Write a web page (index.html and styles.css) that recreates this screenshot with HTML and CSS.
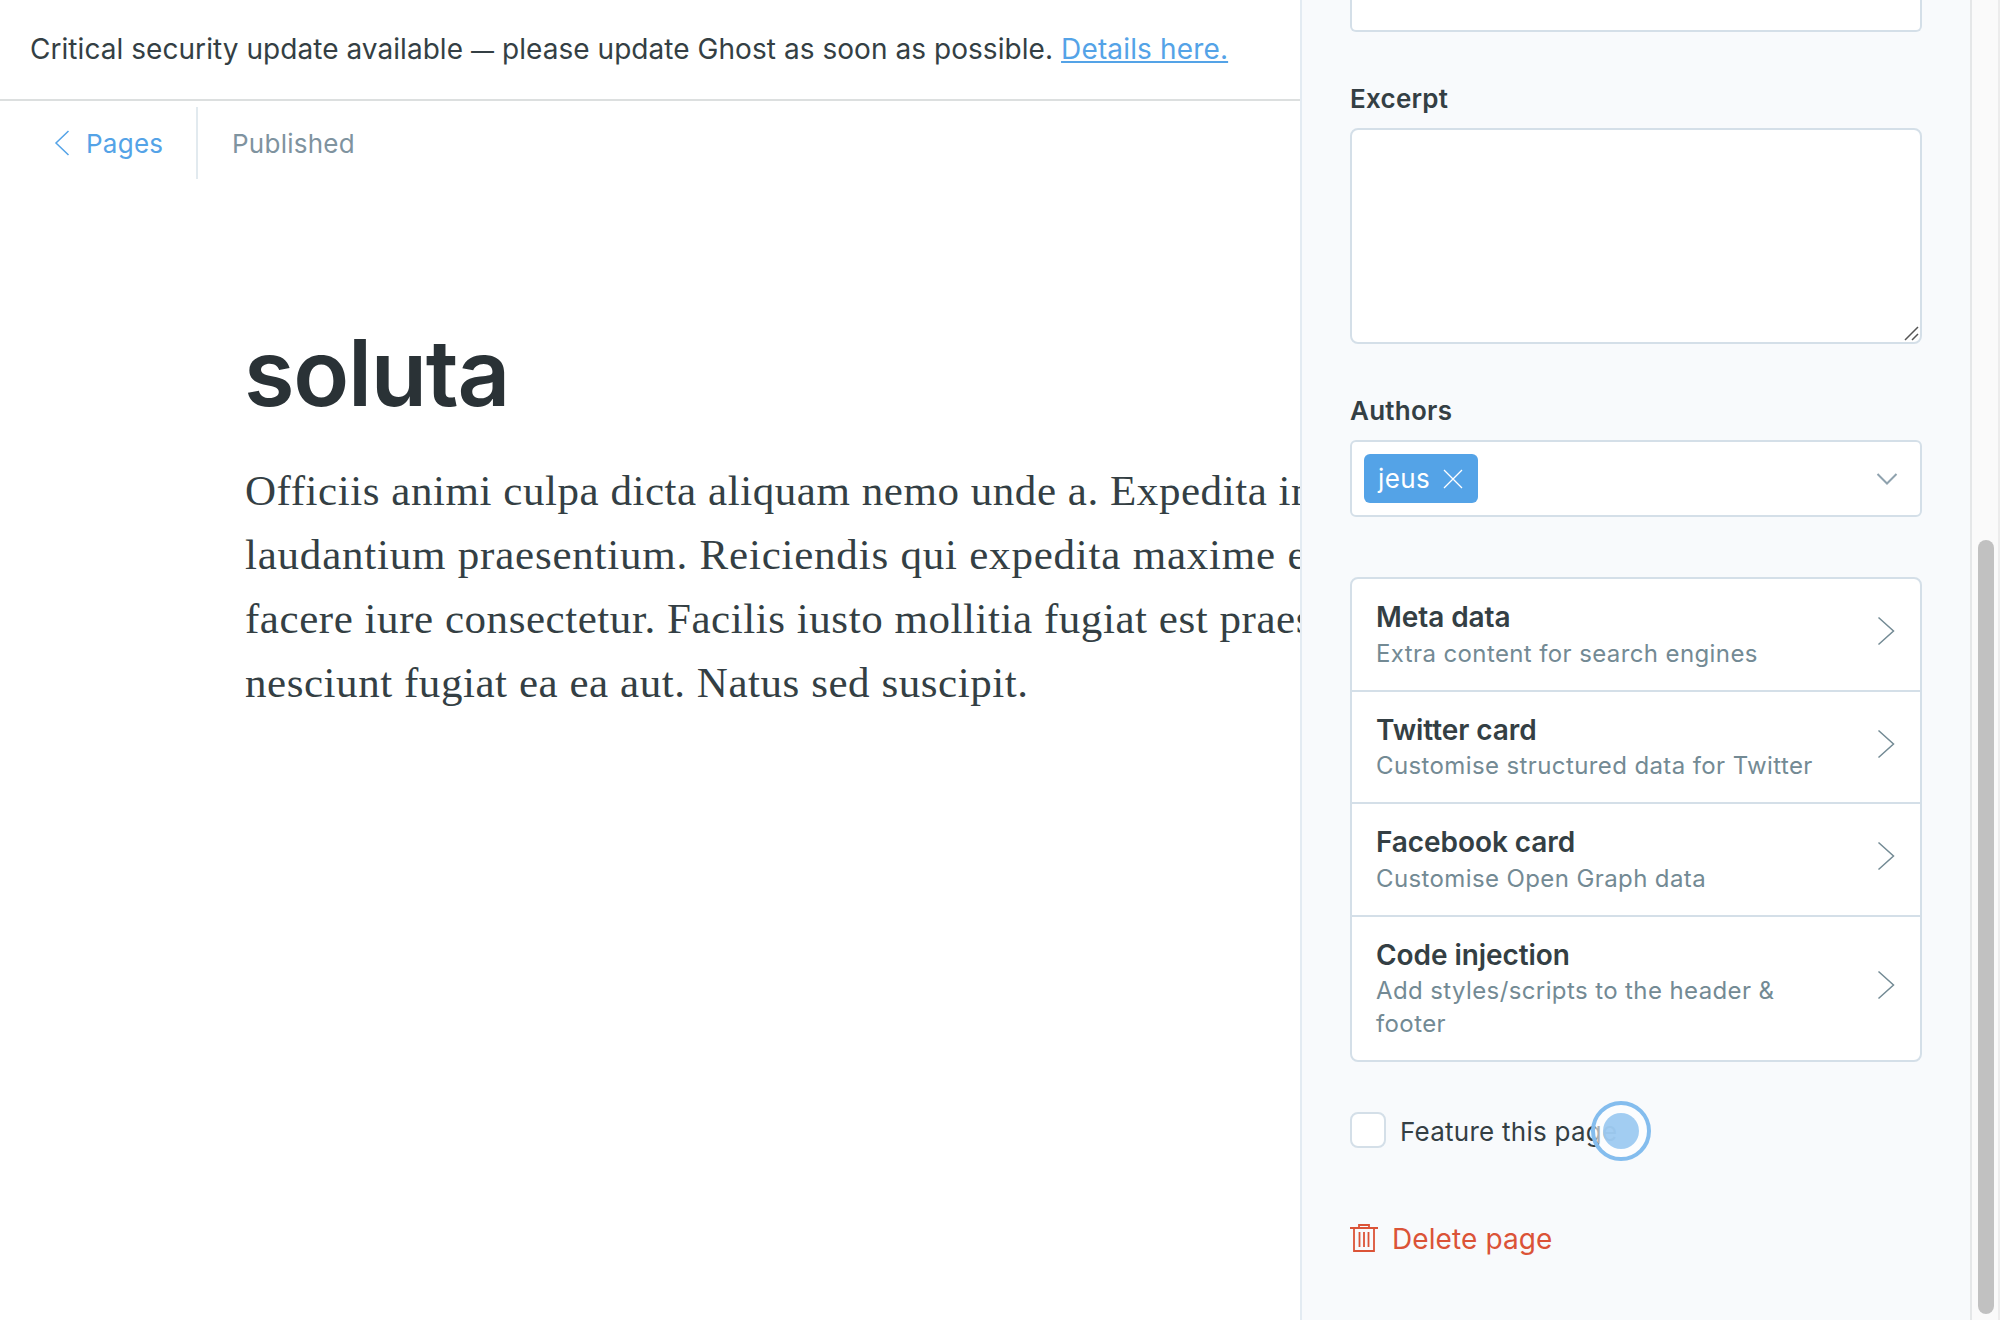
FILE: index.html
```html
<!DOCTYPE html>
<html lang="en">
<head>
<meta charset="utf-8">
<title>soluta</title>
<link rel="stylesheet" href="styles.css">
</head>
<body>
<div class="app">
  <main class="editor">
    <div class="alert"><span class="alert-text">Critical security update available <span class="dash">—</span> please update Ghost as soon as possible.</span><a class="alert-link" href="#">Details here.</a></div>
    <header class="bar">
      <a class="back" href="#"><svg class="back-icon" viewBox="0 0 16 26"><path d="M14.500 1 2 13l12.500 12"/></svg><span>Pages</span></a>
      <span class="status">Published</span>
    </header>
    <article class="post">
      <h1 class="title">soluta</h1>
      <p class="body">Officiis animi culpa dicta aliquam nemo unde a. Expedita in<br><span class="loose">laudantium praesentium. Reiciendis qui expedita maxime e</span><br>facere iure consectetur. Facilis iusto mollitia fugiat est praes<br>nesciunt fugiat ea ea aut. Natus sed suscipit.</p>
    </article>
  </main>
  <aside class="settings">
    <div class="input-cut"></div>
    <label class="label">Excerpt</label>
    <div class="textarea"><svg class="grip" viewBox="0 0 16 16"><path d="M1 14 14 1M8 14l6-6"/></svg></div>
    <label class="label">Authors</label>
    <div class="select">
      <span class="chip">jeus<svg class="x" viewBox="0 0 20 20"><path d="m1 1 18 18M19 1 1 19"/></svg></span>
      <svg class="down" viewBox="0 0 22 14"><path d="m1.500 2 9.500 9.500L20.500 2"/></svg>
    </div>
    <ul class="list">
      <li class="item"><div><b class="name">Meta data</b><span class="desc">Extra content for search engines</span></div><svg class="go" viewBox="0 0 18 30"><path d="m1.500 1.500 15 13.500-15 13.500"/></svg></li>
      <li class="item"><div><b class="name">Twitter card</b><span class="desc">Customise structured data for Twitter</span></div><svg class="go" viewBox="0 0 18 30"><path d="m1.500 1.500 15 13.500-15 13.500"/></svg></li>
      <li class="item"><div><b class="name">Facebook card</b><span class="desc">Customise Open Graph data</span></div><svg class="go" viewBox="0 0 18 30"><path d="m1.500 1.500 15 13.500-15 13.500"/></svg></li>
      <li class="item tall"><div><b class="name">Code injection</b><span class="desc">Add styles/scripts to the header &amp;<br>footer</span></div><svg class="go" viewBox="0 0 18 30"><path d="m1.500 1.500 15 13.500-15 13.500"/></svg></li>
    </ul>
    <label class="feature"><span class="box"></span><span class="feature-text">Feature this page</span><span class="pointer"></span></label>
    <button class="delete"><svg class="trash" viewBox="0 0 28 28"><path d="M0 4h28M4 4v23h20V4M9 4V1h10v3M9.500 8v15M14 8v15M18.500 8v15"/></svg><span class="delete-text">Delete page</span></button>
  </aside>
  <div class="scroll"><div class="thumb"></div></div>
</div>
</body>
</html>
```
FILE: styles.css
```css
* { box-sizing: border-box; }
body { margin: 0; background: #fff; color: #343f44; font: 26px "Inter", sans-serif; letter-spacing: 0.25px; }
.app { display: flex; width: 2000px; height: 1320px; overflow: hidden; }
.editor { width: 1300px; overflow: hidden; }
.alert { display: flex; align-items: center; gap: 8px; height: 101px; padding: 0 30px 2px; border-bottom: 2px solid #dcdfdf; font-size: 28px; letter-spacing: 0.05px; white-space: nowrap; }
.dash { font-size: 23px; }
.alert-link { color: #54a3e7; letter-spacing: 0.15px; text-decoration-thickness: 2px; text-underline-offset: 2px; text-decoration-skip-ink: none; }
.bar { display: flex; align-items: center; height: 84px; }
.back { display: flex; align-items: center; gap: 16px; height: 72px; width: 198px; padding-left: 54px; border-right: 2px solid #e2eaef; color: #54a3e7; text-decoration: none; }
.back-icon { width: 16px; height: 26px; fill: none; stroke: #54a3e7; stroke-width: 1.5; }
.status { padding-left: 34px; color: #7f939f; }
.post { padding: 133px 0 0 245px; }
.title { margin: 0 0 0 -1px; font-size: 92px; line-height: 110px; font-weight: 600; letter-spacing: -1.3px; color: #2a3236; }
.body { margin: 31px 0 0; font: 43px/64px "Liberation Serif", serif; letter-spacing: 0.55px; white-space: nowrap; }
.loose { letter-spacing: 0.78px; }
.settings { width: 670px; padding: 0 48px; border-left: 2px solid #e3ebf2; background: #f8fafc; }
.input-cut { height: 32px; border: 2px solid #d4dfe8; border-top: 0; border-radius: 0 0 6px 6px; background: #fff; }
.label { display: block; margin-top: 51px; height: 45px; line-height: 32px; font-weight: 600; }
.textarea { display: flex; justify-content: flex-end; align-items: flex-end; height: 216px; border: 2px solid #d4dfe8; border-radius: 8px; background: #fff; }
.grip { width: 16px; height: 16px; fill: none; stroke: #555; stroke-width: 1.5; }
.select { display: flex; justify-content: space-between; align-items: center; height: 77px; padding: 0 22px 0 12px; border: 2px solid #d4dfe8; border-radius: 6px; background: #fff; }
.chip { display: flex; align-items: center; gap: 13px; height: 49px; width: 114px; padding: 0 14px; border-radius: 6px; background: #54a3e7; color: #fff; letter-spacing: 0.4px; }
.x { width: 20px; height: 20px; fill: none; stroke: #fff; stroke-width: 1.3; }
.down { width: 22px; height: 14px; fill: none; stroke: #8fa2ae; stroke-width: 2; }
.list { margin: 60px 0 0; padding: 0; list-style: none; border: 2px solid #d4dfe8; border-radius: 8px; background: #fff; }
.item { display: flex; justify-content: space-between; height: 112.5px; padding: 20px 25px 20px 24px; border-bottom: 2px solid #d4dfe8; }
.tall { height: 143px; border: 0; }
.name { display: block; margin-bottom: 1.5px; font-size: 28px; line-height: 36px; font-weight: 600; letter-spacing: -0.07px; }
.desc { display: block; font-size: 24px; line-height: 33px; letter-spacing: 0.39px; color: #738a94; }
.go { width: 18px; height: 30px; align-self: center; margin-bottom: 6px; fill: none; stroke: #738a94; stroke-width: 1.5; }
.feature { position: relative; display: flex; align-items: center; gap: 14px; margin-top: 50px; height: 36px; }
.feature-text { padding-top: 4px; }
.box { width: 36px; height: 36px; border: 2px solid #d4dfe8; border-radius: 8px; background: #fff; }
.pointer { position: absolute; left: 241px; top: -11px; display: grid; place-items: center; width: 60px; height: 60px; border-radius: 50%; border: 4px solid #84bdee; background: rgba(255, 255, 255, 0.6) padding-box; }
.pointer::after { content: ""; width: 36px; height: 36px; border-radius: 50%; background: rgba(152, 200, 241, 0.9); }
.delete { display: flex; align-items: center; gap: 14px; margin-top: 73px; padding: 0; border: 0; background: none; font: 28px "Inter", sans-serif; letter-spacing: 0.1px; color: #db5337; }
.delete-text { padding-top: 1px; }
.trash { width: 28px; height: 28px; fill: none; stroke: #db5337; stroke-width: 1.8; }
.scroll { width: 30px; padding: 540px 4px 0 6px; border-left: 2px solid #e5e7e8; border-right: 2px solid #ececec; background: #fafafa; }
.thumb { height: 774px; width: 16px; border-radius: 8px; background: #c1c1c1; }
```
